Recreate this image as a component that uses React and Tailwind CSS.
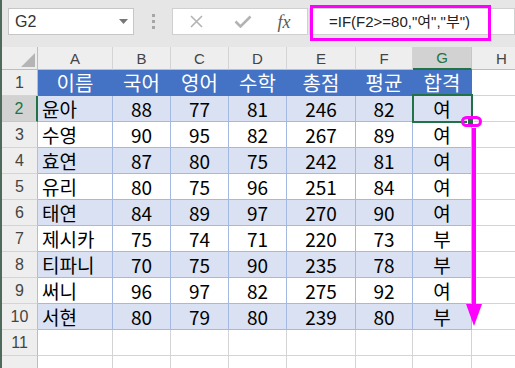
import React from "react";

const letters = ["A", "B", "C", "D", "E", "F", "G", "H"];
const header = ["이름", "국어", "영어", "수학", "총점", "평균", "합격"];
const data = [
  ["윤아", "88", "77", "81", "246", "82", "여"],
  ["수영", "90", "95", "82", "267", "89", "여"],
  ["효연", "87", "80", "75", "242", "81", "여"],
  ["유리", "80", "75", "96", "251", "84", "여"],
  ["태연", "84", "89", "97", "270", "90", "여"],
  ["제시카", "75", "74", "71", "220", "73", "부"],
  ["티파니", "70", "75", "90", "235", "78", "부"],
  ["써니", "96", "97", "82", "275", "92", "여"],
  ["서현", "80", "79", "80", "239", "80", "부"],
];

const KR = "font-['Noto_Sans_CJK_KR','Noto_Sans',sans-serif]";
const LS = "font-['Liberation_Sans','Noto_Sans_CJK_KR',sans-serif]";

function Toolbar() {
  return (
    <div className="h-[47px] flex items-start pt-[8px] pl-[6px] shrink-0">
      <div className="w-[126px] h-[27px] bg-white border border-[#c6c6c6] flex items-center justify-between pl-[6px] pr-[5px]">
        <span className={`${LS} text-[16px] text-[#333] leading-none`}>G2</span>
        <svg width="9" height="5" viewBox="0 0 9 5">
          <path d="M0 0 L9 0 L4.5 5 Z" fill="#777" />
        </svg>
      </div>
      <div className="w-[38px] h-[27px] flex flex-col items-center justify-center gap-[3px]">
        <div className="w-[3px] h-[3px] bg-[#a6a6a6]" />
        <div className="w-[3px] h-[3px] bg-[#a6a6a6]" />
        <div className="w-[3px] h-[3px] bg-[#a6a6a6]" />
      </div>
      <div className="w-[136px] h-[27px] bg-white border border-[#d0d0d0] flex items-center">
        <div className="w-[46px] flex justify-center">
          <svg width="13" height="13" viewBox="0 0 13 13">
            <path d="M1 1 L12 12 M12 1 L1 12" stroke="#b3b3b3" strokeWidth="1.6" />
          </svg>
        </div>
        <div className="w-[48px] flex justify-center">
          <svg width="18" height="13" viewBox="0 0 18 13">
            <path d="M1.5 6.5 L6.5 11.5 L16.5 1.5" stroke="#b3b3b3" strokeWidth="2.6" fill="none" />
          </svg>
        </div>
        <div className="w-[34px] flex justify-center">
          <span className="font-['Liberation_Serif',serif] italic text-[18px] text-[#5a5a5a] leading-none">fx</span>
        </div>
      </div>
      <div className="ml-[1px] flex-1 h-[27px] bg-white border border-[#d0d0d0] flex items-center pl-[19px]">
        <span className={`${LS} text-[15px] text-[#222] leading-none whitespace-nowrap`}>
          =IF(F2&gt;=80,"여","부")
        </span>
      </div>
    </div>
  );
}

function Grid() {
  const cells = [];
  cells.push(
    <div key="corner" className="bg-[#eeeeee] border-r border-b border-[#bdbdbd] flex items-end justify-end pr-[2px] pb-[2px]">
      <svg width="14" height="14" viewBox="0 0 14 14">
        <path d="M14 0 L14 14 L0 14 Z" fill="#b5b5b5" />
      </svg>
    </div>
  );
  letters.forEach((l) => {
    const sel = l === "G";
    cells.push(
      <div
        key={"h" + l}
        className={
          sel
            ? `bg-[#d2d2d2] border-r border-[#c6c6c6] border-b-2 border-b-[#217346] flex items-center justify-center ${LS} text-[15px] text-[#217346] leading-none`
            : `bg-[#eeeeee] border-r border-[#d4d4d4] border-b border-b-[#bdbdbd] flex items-center justify-center ${LS} text-[15px] text-[#444] leading-none`
        }
      >
        {l}
      </div>
    );
  });

  for (let r = 1; r <= 12; r++) {
    const sel = r === 2;
    cells.push(
      <div
        key={"r" + r}
        className={
          sel
            ? `bg-[#d2d2d2] border-b border-[#c6c6c6] border-r-2 border-r-[#217346] flex items-center justify-center ${LS} text-[16px] text-[#217346] leading-none`
            : `bg-[#eeeeee] border-b border-[#d4d4d4] border-r border-r-[#bdbdbd] flex items-center justify-center ${LS} text-[16px] text-[#444] leading-none`
        }
      >
        {r <= 11 ? r : ""}
      </div>
    );
    for (let c = 0; c < 8; c++) {
      const key = `c${r}-${c}`;
      if (c === 7 || r > 10) {
        cells.push(<div key={key} className="bg-white border-r border-b border-[#d4d4d4]" />);
        continue;
      }
      if (r === 1) {
        cells.push(
          <div
            key={key}
            className={`bg-[#4472c4] border-r border-b border-[#4472c4] flex items-center justify-center ${KR} text-[20px] text-white leading-none`}
          >
            {header[c]}
          </div>
        );
        continue;
      }
      const band = r % 2 === 0;
      const txt = data[r - 2][c];
      cells.push(
        <div
          key={key}
          className={`${band ? "bg-[#d9e1f2]" : "bg-white"} border-r border-b border-[#a3b9e1] flex items-center ${
            c === 0 ? "justify-start pl-[4px]" : "justify-center"
          } ${KR} text-[19px] text-black leading-none whitespace-nowrap`}
        >
          {txt}
        </div>
      );
    }
  }

  return (
    <div className="grid grid-cols-[36px_75px_58px_58px_58px_69px_57px_59px_60px] grid-rows-[23px_repeat(12,26px)]">
      {cells}
    </div>
  );
}

export default function App() {
  return (
    <div className="relative w-[515px] h-[368px] overflow-hidden bg-[#e6e6e6] flex">
      <div className="w-[2px] shrink-0 bg-[#4e6a5a]" />
      <div className="flex-1 flex flex-col min-w-0">
        <Toolbar />
        <Grid />
      </div>

      <div className="absolute left-[310px] top-[5px] w-[181px] h-[36px] border-[3px] border-[#ff00ff]" />

      <div className="absolute left-[412px] top-[94px] w-[61px] h-[29px] border-2 border-[#217346]" />
      <div className="absolute left-[467px] top-[118px] w-[7px] h-[7px] bg-[#217346] border border-white" />
      <div className="absolute left-[461px] top-[116px] w-[21px] h-[11px] rounded-full border-[3px] border-[#ff00ff]" />
      <div className="absolute left-[472px] top-[128px] w-[4px] h-[180px] bg-[#ff00ff]" />
      <svg className="absolute left-[466px] top-[304px]" width="16" height="22" viewBox="0 0 16 22">
        <path d="M0 0 L16 0 L8 22 Z" fill="#ff00ff" />
      </svg>
    </div>
  );
}
